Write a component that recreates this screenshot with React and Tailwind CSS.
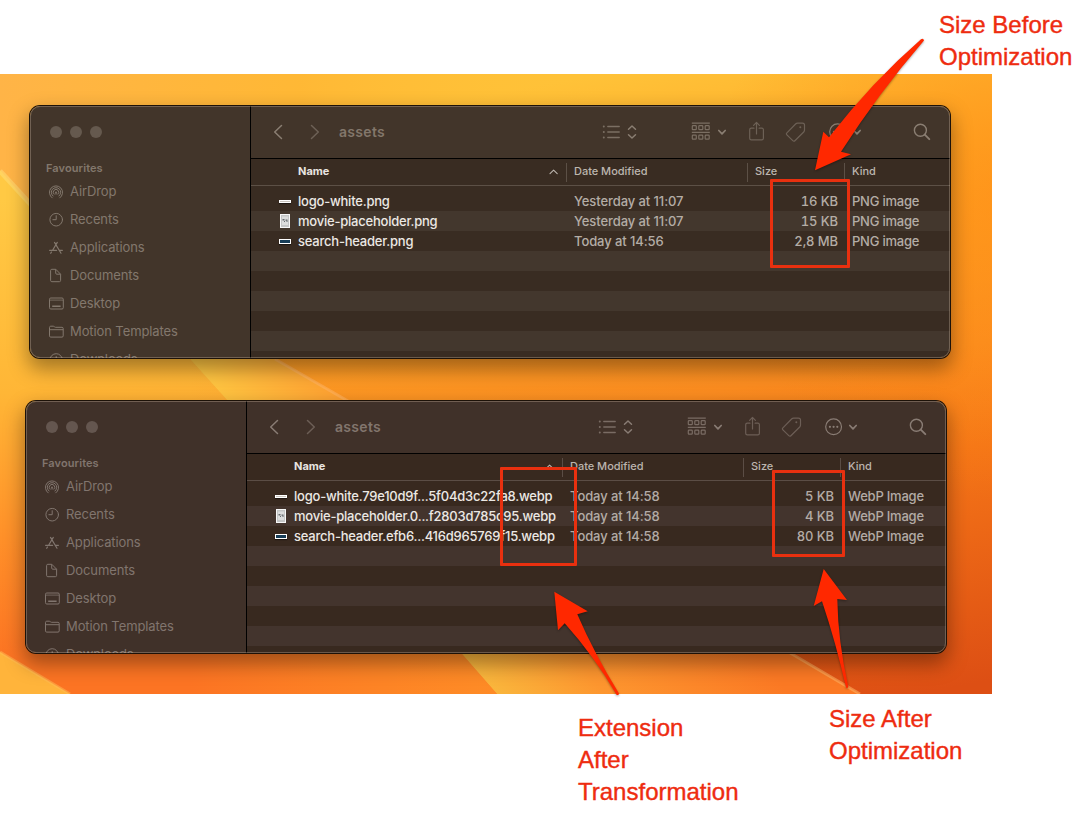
import React from "react";

const ink = "fill-none stroke-current";

function AirDropIcon() {
  return (
    <svg width="16" height="16" viewBox="0 0 16 16" className={ink} strokeWidth="1" strokeLinecap="round">
      <path d="M4.2 13.9a6.6 6.6 0 1 1 7.6 0" />
      <path d="M5 12a4.7 4.7 0 1 1 6 0" />
      <path d="M6 10.2a2.8 2.8 0 1 1 4 0" />
      <circle cx="8" cy="8.4" r="0.9" className="fill-current stroke-none" />
      <path d="M8 9v1.2" />
    </svg>
  );
}

function ClockIcon() {
  return (
    <svg width="16" height="16" viewBox="0 0 16 16" className={ink} strokeWidth="1" strokeLinecap="round">
      <circle cx="8.2" cy="7.7" r="6.3" />
      <path d="M8.2 3.700V7.700H4.9" />
    </svg>
  );
}

function AppsIcon() {
  return (
    <svg width="16" height="16" viewBox="0 0 16 16" className={ink} strokeWidth="1.200" strokeLinecap="round">
      <path d="M6.500 2.400 13 13.200M9.300 2.400 4.600 10.200M3.400 12.100l-.7 1.200M1.600 10.300h7M11.500 10.300h2.900" />
    </svg>
  );
}

function DocIcon() {
  return (
    <svg width="16" height="16" viewBox="0 0 16 16" className={ink} strokeWidth="1" strokeLinejoin="round">
      <path d="M3.800 1.300h4l4.800 4.900v6.200c0 .8-.4 1.300-1.200 1.300H3.800c-.8 0-1.200-.5-1.200-1.300V2.600c0-.8.4-1.300 1.200-1.300Z" />
      <path d="M7.700 1.400v3.700c0 .7.4 1.100 1.100 1.100h3.700" />
    </svg>
  );
}

function DesktopIcon() {
  return (
    <svg width="16" height="16" viewBox="0 0 16 16" className={ink} strokeWidth="1">
      <rect x="1.500" y="2" width="13.800" height="11" rx="1.300" />
      <path d="M1.500 4.100h13.800" strokeWidth="0.800" />
      <path d="M4.200 10.300h8.400" strokeWidth="1.600" />
    </svg>
  );
}

function FolderIcon() {
  return (
    <svg width="16" height="16" viewBox="0 0 16 16" className={ink} strokeWidth="1" strokeLinejoin="round">
      <path d="M1.500 11.900V3.400c0-.7.5-1.200 1.200-1.200h2.600c.9 0 1.300 1.100 2.200 1.100H14c.8 0 1.200.4 1.200 1.200v7.400c0 .8-.4 1.200-1.200 1.200H2.700c-.7 0-1.200-.4-1.200-1.200Z" />
      <path d="M1.500 5.700h13.700" />
    </svg>
  );
}

function DownloadIcon() {
  return (
    <svg width="16" height="16" viewBox="0 0 16 16" className={ink} strokeWidth="1" strokeLinecap="round">
      <circle cx="8.200" cy="8" r="6.300" />
      <path d="M8.200 4.500v7M5.500 9l2.700 2.500L10.900 9" />
    </svg>
  );
}

function MiniChevron({ className }) {
  return (
    <svg width="10" height="10" viewBox="0 0 10 10" className={`${ink} ${className}`} strokeWidth="1.700" strokeLinecap="round" strokeLinejoin="round">
      <path d="M1.800 3.500 5 6.800l3.200-3.300" />
    </svg>
  );
}

const places = [
  ["AirDrop", AirDropIcon],
  ["Recents", ClockIcon],
  ["Applications", AppsIcon],
  ["Documents", DocIcon],
  ["Desktop", DesktopIcon],
  ["Motion Templates", FolderIcon],
  ["Downloads", DownloadIcon],
];

function Sidebar({ theme }) {
  return (
    <aside className={`h-full w-[221px] shrink-0 border-r border-black pt-5 ${theme.chrome}`}>
      <div className="flex gap-2 pl-5">
        <span className={`size-3 rounded-full ${theme.dot}`} />
        <span className={`size-3 rounded-full ${theme.dot}`} />
        <span className={`size-3 rounded-full ${theme.dot}`} />
      </div>
      <div className={`mt-[22px] pl-4 text-[11px] leading-4 font-semibold tracking-[0.1px] ${theme.heading}`}>Favourites</div>
      <ul className={`mt-[1.500px] text-[13px] tracking-[-0.1px] ${theme.item}`}>
        {places.map(([label, Icon]) => (
          <li key={label} className="flex h-7 items-center gap-[6px] pl-[18px] whitespace-nowrap">
            <Icon />
            <span>{label}</span>
          </li>
        ))}
      </ul>
    </aside>
  );
}

function Toolbar({ theme }) {
  return (
    <div className={`flex h-[53px] shrink-0 items-center border-b border-black ${theme.chrome} ${theme.faint}`}>
      <svg width="10" height="16" viewBox="0 0 10 16" className={`ml-[22px] ${ink} ${theme.icon}`} strokeWidth="1.500" strokeLinecap="round" strokeLinejoin="round">
        <path d="M8.500 1.500 1.700 8l6.800 6.500" />
      </svg>
      <svg width="10" height="16" viewBox="0 0 10 16" className={`ml-[27px] ${ink}`} strokeWidth="1.500" strokeLinecap="round" strokeLinejoin="round">
        <path d="M1.500 1.500 8.300 8l-6.800 6.500" />
      </svg>
      <span className={`ml-[19px] w-[263px] text-[14px] leading-5 font-semibold tracking-[0.3px] ${theme.title}`}>assets</span>
      <svg width="18" height="16" viewBox="0 0 18 16" className={`${ink} ${theme.list}`} strokeWidth="1.400" strokeLinecap="round">
        <path d="M5.800 2.500h11.400M5.800 8h11.400M5.800 13.500h11.400" />
        <path d="M1.700 2.500h.2M1.700 8h.2M1.700 13.500h.2" strokeWidth="1.800" />
      </svg>
      <svg width="10" height="16" viewBox="0 0 10 16" className={`ml-[7px] ${ink} ${theme.icon}`} strokeWidth="1.500" strokeLinecap="round" strokeLinejoin="round">
        <path d="M1.500 5.200 5 2l3.500 3.200M1.500 10.800 5 14l3.500-3.200" />
      </svg>
      <svg width="20" height="20" viewBox="0 0 20 20" className={`ml-[54px] ${ink} ${theme.list}`} strokeWidth="1.200">
        <path d="M.8 1.100h18M.8 10.400h18" />
        <rect x="1.300" y="3.700" width="4" height="4" rx=".8" />
        <rect x="7.800" y="3.700" width="4" height="4" rx=".8" />
        <rect x="14.200" y="3.700" width="4" height="4" rx=".8" />
        <rect x="1.300" y="13.200" width="4" height="4" rx=".8" />
        <rect x="7.800" y="13.200" width="4" height="4" rx=".8" />
        <rect x="14.200" y="13.200" width="4" height="4" rx=".8" />
      </svg>
      <MiniChevron className={`ml-[6px] ${theme.icon}`} />
      <svg width="18" height="22" viewBox="0 0 18 22" className={`ml-[21px] ${ink}`} strokeWidth="1.200" strokeLinecap="round" strokeLinejoin="round">
        <path d="M6 7.200H3.300c-1 0-1.600.6-1.600 1.600v8.400c0 1 .6 1.600 1.600 1.600h10.500c1 0 1.600-.6 1.600-1.600V8.800c0-1-.6-1.600-1.600-1.600h-2.700M8.500 13V1.500M5.600 4.300l2.900-2.900 2.900 2.900" />
      </svg>
      <svg width="22" height="22" viewBox="0 0 22 22" className={`ml-[19px] ${ink}`} strokeWidth="1.200" strokeLinejoin="round">
        <path d="M1.900 11.800 10.600 3c.6-.6 1.200-.9 2-.9h4.900c1.300 0 2 .7 2 2v5c0 .8-.3 1.300-.8 1.900l-8.800 8.700c-.7.7-1.400.7-2.100 0l-5.900-5.800c-.7-.7-.7-1.400 0-2.100Z" />
        <circle cx="15.300" cy="6.300" r="1" className="fill-current stroke-none" />
      </svg>
      <svg width="20" height="20" viewBox="0 0 20 20" className={`ml-[21px] ${ink} ${theme.icon}`} strokeWidth="1.200">
        <circle cx="9.600" cy="9.800" r="7.900" />
        <g className="fill-current stroke-none">
          <circle cx="5.900" cy="9.800" r="1.100" />
          <circle cx="9.600" cy="9.800" r="1.100" />
          <circle cx="13.300" cy="9.800" r="1.100" />
        </g>
      </svg>
      <MiniChevron className={`ml-1 ${theme.icon}`} />
      <svg width="18" height="18" viewBox="0 0 18 18" className={`ml-[51px] ${ink} ${theme.icon}`} strokeLinecap="round">
        <circle cx="7.400" cy="7.200" r="6" strokeWidth="1.400" />
        <path d="m11.800 11.700 4.500 4.500" strokeWidth="1.900" />
      </svg>
    </div>
  );
}

function Thumb({ kind }) {
  if (kind === "line") {
    return (
      <span className="flex h-[3px] w-3 shrink-0 items-center bg-white shadow-[0_1px_1px_rgba(0,0,0,0.5)]">
        <span className="mx-px h-px w-full bg-[#c9c4bd]" />
      </span>
    );
  }
  if (kind === "page") {
    return (
      <svg width="12" height="14" viewBox="0 0 12 14" className="shrink-0">
        <rect x="1" width="10" height="14" fill="#f7f7f7" />
        <rect x="2" y="1" width="8" height="12" fill="#c4c6c6" />
        <rect x="3" y="2.500" width="6" height="8.500" fill="#dcdddd" />
        <path d="M3.500 5h2v1.500h-2zM6.500 5.500h2V8h-1V6.800h-1zM5 7h1v1H5z" fill="#656b6f" />
      </svg>
    );
  }
  return <span className="h-[5px] w-3 shrink-0 border border-white bg-[#173d57] shadow-[0_1px_1px_rgba(0,0,0,0.5)]" />;
}

function FileTable({ rows, theme }) {
  const cells = [...rows, null, null, null, null, null, null];
  return (
    <div className={`flex-1 overflow-hidden ${theme.dark}`}>
      <div className={`flex h-[27px] items-center border-b text-[11px] font-medium ${theme.rule} ${theme.head}`}>
        <div className="flex h-[19px] w-[315px] items-center justify-between pr-2 pl-[47px]">
          <span className="pb-[2px] font-bold text-[#e9e5e1]">Name</span>
          <svg width="10" height="8" viewBox="0 0 10 8" className={ink} strokeWidth="1.100" strokeLinecap="round" strokeLinejoin="round">
            <path d="m2 5.700 3.600-3.500 3.600 3.500" />
          </svg>
        </div>
        <div className={`flex h-[19px] w-[181px] items-center border-l pb-[2px] pl-[7px] tracking-[-0.02px] ${theme.divider}`}>Date Modified</div>
        <div className={`flex h-[19px] w-[97px] items-center border-l pb-[2px] pl-[7px] ${theme.divider}`}>Size</div>
        <div className={`flex h-[19px] flex-1 items-center border-l pb-[2px] pl-[7px] ${theme.divider}`}>Kind</div>
      </div>
      <div className="pt-[5px]">
        {cells.map((row, i) => (
          <div key={i} className={`flex h-5 items-center text-[13px] leading-[18px] font-medium whitespace-nowrap ${i % 2 ? theme.light : ""} ${theme.body}`}>
            {row && (
              <>
                <div className="flex w-[315px] items-center gap-[7px] pl-7 text-[#ece8e4]">
                  <Thumb kind={row.thumb} />
                  <span className="tracking-[-0.22px]">{row.name}</span>
                </div>
                <div className="w-[181px] pl-2 tracking-[-0.09px]">{row.date}</div>
                <div className="w-[97px] pr-[6px] text-right tracking-[-0.1px] tabular-nums">{row.size}</div>
                <div className="flex-1 pl-2 tracking-[-0.22px]">{row.kind}</div>
              </>
            )}
          </div>
        ))}
      </div>
    </div>
  );
}

function FinderWindow({ rows, theme, place }) {
  return (
    <section
      className={`absolute h-[252px] w-[920px] rounded-[10px] shadow-[0_0_0_1px_#1d1208,0_9px_20px_2px_rgba(0,0,0,0.36)] ${place}`}
    >
      <div className="flex h-full overflow-hidden rounded-[10px]">
        <Sidebar theme={theme} />
        <div className="flex min-w-0 flex-1 flex-col">
          <Toolbar theme={theme} />
          <FileTable rows={rows} theme={theme} />
        </div>
      </div>
      <div className="pointer-events-none absolute inset-0 rounded-[10px] border border-[#ffe9d0]/25" />
    </section>
  );
}

function Wallpaper() {
  return (
    <svg width="992" height="620" viewBox="0 74 992 620" className="absolute inset-0">
      <defs>
        <linearGradient id="sky" gradientUnits="userSpaceOnUse" x1="600" y1="74" x2="720" y2="730">
          <stop offset="0" stopColor="#ffc238" />
          <stop offset="0.2" stopColor="#ffab29" />
          <stop offset="0.5" stopColor="#fb8c20" />
          <stop offset="0.65" stopColor="#f57517" />
          <stop offset="1" stopColor="#dd4f14" />
        </linearGradient>
        <radialGradient id="dusk" gradientUnits="userSpaceOnUse" cx="1010" cy="200" r="300">
          <stop offset="0" stopColor="#ff8f15" stopOpacity="0.7" />
          <stop offset="1" stopColor="#ff8f15" stopOpacity="0" />
        </radialGradient>
        <linearGradient id="corner" gradientUnits="userSpaceOnUse" x1="0" y1="100" x2="600" y2="74">
          <stop offset="0" stopColor="#ffb447" />
          <stop offset="0.5" stopColor="#ffb735" stopOpacity="0.900" />
          <stop offset="1" stopColor="#ffc238" stopOpacity="0" />
        </linearGradient>
        <linearGradient id="left" gradientUnits="userSpaceOnUse" x1="0" y1="200" x2="40" y2="680">
          <stop offset="0" stopColor="#ffc944" />
          <stop offset="0.4" stopColor="#ffb636" />
          <stop offset="0.7" stopColor="#ff9029" />
          <stop offset="0.950" stopColor="#fc7423" />
        </linearGradient>
        <linearGradient id="leftGlow" gradientUnits="userSpaceOnUse" x1="190" y1="0" x2="480" y2="0">
          <stop offset="0" stopColor="#ff9a28" stopOpacity="0" />
          <stop offset="1" stopColor="#ff9427" stopOpacity="0.700" />
        </linearGradient>
        <linearGradient id="wedge" gradientUnits="userSpaceOnUse" x1="470" y1="680" x2="660" y2="530">
          <stop offset="0" stopColor="#f9ba3e" />
          <stop offset="0.400" stopColor="#fd962f" />
          <stop offset="1" stopColor="#fb7924" />
        </linearGradient>
        <linearGradient id="wedgeTop" gradientUnits="userSpaceOnUse" x1="200" y1="390" x2="320" y2="340">
          <stop offset="0" stopColor="#ffc943" />
          <stop offset="1" stopColor="#ffa031" />
        </linearGradient>
      </defs>
      <rect y="74" width="992" height="620" fill="url(#sky)" />
      <rect x="680" y="74" width="312" height="460" fill="url(#dusk)" />
      <rect y="74" width="620" height="190" fill="url(#corner)" />
      <path d="M130 275 348 401 792 654 860 694H420L190 359Z" fill="url(#wedge)" />
      <path d="M130 275 275 359 348 401H228L190 359Z" fill="url(#wedgeTop)" />
      <path d="M0 170 30 205 190 359 228 401 462 654 497 694H0Z" fill="url(#left)" />
      <path d="M0 170 30 205 190 359 228 401 462 654 497 694H0Z" fill="url(#leftGlow)" />
      <path d="M0 171 34 208" stroke="#ffe07a" strokeOpacity=".5" strokeWidth="5" />
      <path d="M275 359 348 401 792 654 860 694" fill="none" stroke="#ffb565" strokeOpacity=".55" strokeWidth="3" />
      <path d="M0 652 70 694H0Z" fill="#ffb43b" />
      <path d="M0 652 70 694" stroke="#ffbd55" strokeWidth="3" strokeOpacity=".5" />
    </svg>
  );
}

const warm = {
  chrome: "bg-[#42352a]",
  dark: "bg-[#392c22]",
  light: "bg-[#43372d]",
  dot: "bg-[#65594e]",
  heading: "text-[#83786d]",
  item: "text-[#83786d]",
  title: "text-[#83776b]",
  icon: "text-[#8a7e72]",
  list: "text-[#7b6f63]",
  faint: "text-[#6d6156]",
  head: "text-[#bdb6af]",
  body: "text-[#b4ada6]",
  rule: "border-[#5c5046]",
  divider: "border-[#5c5046]",
};

const rosy = {
  chrome: "bg-[#403129]",
  dark: "bg-[#38291f]",
  light: "bg-[#43342d]",
  dot: "bg-[#64564f]",
  heading: "text-[#81756e]",
  item: "text-[#81756e]",
  title: "text-[#82756d]",
  icon: "text-[#897c74]",
  list: "text-[#7a6c64]",
  faint: "text-[#6c5e56]",
  head: "text-[#bcb4ae]",
  body: "text-[#b3aba6]",
  rule: "border-[#5b4d45]",
  divider: "border-[#5b4d45]",
};

const before = [
  { thumb: "line", name: "logo-white.png", date: "Yesterday at 11:07", size: "16 KB", kind: "PNG image" },
  { thumb: "page", name: "movie-placeholder.png", date: "Yesterday at 11:07", size: "15 KB", kind: "PNG image" },
  { thumb: "banner", name: "search-header.png", date: "Today at 14:56", size: "2,8 MB", kind: "PNG image" },
];

const after = [
  { thumb: "line", name: "logo-white.79e10d9f...5f04d3c22fa8.webp", date: "Today at 14:58", size: "5 KB", kind: "WebP Image" },
  { thumb: "page", name: "movie-placeholder.0...f2803d785c95.webp", date: "Today at 14:58", size: "4 KB", kind: "WebP Image" },
  { thumb: "banner", name: "search-header.efb6...416d965769f15.webp", date: "Today at 14:58", size: "80 KB", kind: "WebP Image" },
];

function Note({ lines, place }) {
  return (
    <div
      className={`absolute font-['Liberation_Sans',Arial,sans-serif] text-2xl leading-8 whitespace-nowrap text-[#ee2c10] [-webkit-text-stroke:0.4px_#ee2c10] ${place}`}
    >
      {lines.map((line) => (
        <div key={line}>{line}</div>
      ))}
    </div>
  );
}

export default function App() {
  return (
    <main className="relative h-[814px] w-[1083px] overflow-hidden bg-white pt-[74px] font-[Inter,sans-serif]">
      <div className="relative h-[620px] w-[992px] overflow-hidden">
        <Wallpaper />
        <FinderWindow rows={before} theme={warm} place="left-[30px] top-8" />
        <FinderWindow rows={after} theme={rosy} place="left-[26px] top-[327px]" />
      </div>

      <div className="absolute top-[179px] left-[770px] h-[89px] w-[80px] rounded-[1px] border-3 border-[#e8300f]" />
      <div className="absolute top-[467px] left-[500px] h-[99px] w-[77px] rounded-[1px] border-3 border-[#e8300f]" />
      <div className="absolute top-[470px] left-[772px] h-[87px] w-[73px] rounded-[1px] border-3 border-[#e8300f]" />

      <svg width="1083" height="814" viewBox="0 0 1083 814" className="absolute inset-0 fill-[#ff2800] drop-shadow-[0_1px_1px_rgba(0,0,0,0.35)]">
        <path d="M815 170.300 823.300 131.700 829 137.300Q872 82 921 39.300Q923.500 38 924 40.500Q878 94 841 151.700L851 154.300Z" />
        <path d="M554.300 591.700 587.700 611.300 577.300 614.300Q594 653 619 693.500Q619 695.500 616.700 695Q594 656 564.700 623.300L558 630.300Z" />
        <path d="M823.700 569 847 600 837.300 599Q838 642 848.300 686.500Q847.500 689 846 687.500Q836 643 822 601.300L813.700 606Z" />
      </svg>

      <Note lines={["Size Before", "Optimization"]} place="top-[9px] left-[939px]" />
      <Note lines={["Extension", "After", "Transformation"]} place="top-[712px] left-[578px]" />
      <Note lines={["Size After", "Optimization"]} place="top-[703px] left-[829px]" />
    </main>
  );
}
